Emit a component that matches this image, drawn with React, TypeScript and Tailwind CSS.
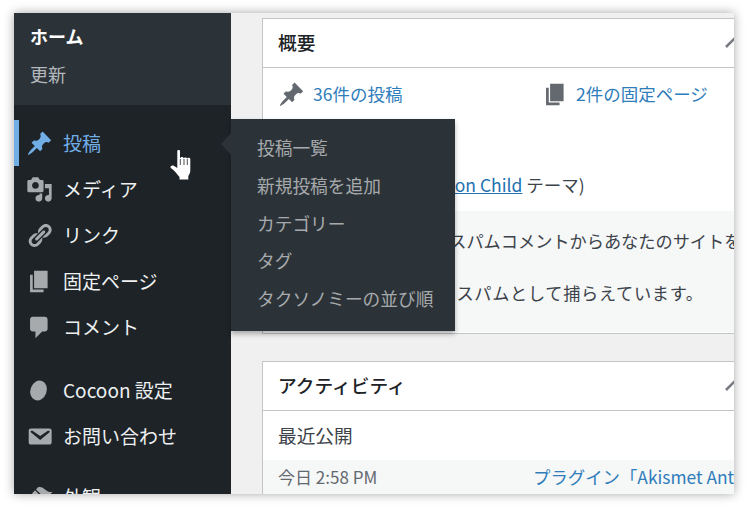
import React from 'react';

const font = "[font-family:'Noto_Sans_CJK_JP','Open_Sans',sans-serif]";

function Dash({ d, className }: { d: string; className: string }) {
  return (
    <svg viewBox="0 0 20 20" fill="currentColor" className={className}>
      <path d={d} />
    </svg>
  );
}

const pin = 'M10.44 3.02l1.82-1.82 6.36 6.35-1.83 1.82c-1.05-.68-2.48-.57-3.41.36l-.75.75c-.92.93-1.04 2.35-.35 3.41l-1.83 1.82-2.41-2.41-2.8 2.79c-.42.42-3.38 2.71-3.8 2.29s1.86-3.39 2.28-3.81l2.79-2.79L4.1 9.36l1.83-1.82c1.05.69 2.48.57 3.4-.36l.75-.75c.93-.92 1.05-2.35.36-3.41z';
const media = 'M13 11V4c0-.55-.45-1-1-1h-1.67L9 1H5L3.67 3H2c-.55 0-1 .45-1 1v7c0 .55.45 1 1 1h10c.55 0 1-.45 1-1zM7 4.5c1.38 0 2.5 1.12 2.5 2.5S8.38 9.5 7 9.5 4.5 8.38 4.5 7 5.62 4.5 7 4.5zM14 6h5v10.5c0 1.38-1.12 2.5-2.5 2.5S14 17.88 14 16.5s1.12-2.5 2.5-2.5c.17 0 .34.02.5.05V9h-3V6zm-4 8.05V13h2v3.5c0 1.38-1.12 2.5-2.5 2.5S7 17.88 7 16.5 8.12 14 9.5 14c.17 0 .34.02.5.05z';
const links = 'M17.74 2.76c1.68 1.69 1.68 4.41 0 6.1l-1.53 1.52c-1.12 1.12-2.7 1.47-4.14 1.09l2.62-2.61.76-.77.76-.76c.84-.84.84-2.2 0-3.04-.84-.85-2.2-.85-3.04 0l-.77.76-3.38 3.38c-.37-1.44-.02-3.02 1.1-4.14l1.52-1.53c1.69-1.68 4.42-1.68 6.1 0zM8.59 13.43l5.34-5.34c.42-.42.42-1.1 0-1.52-.44-.43-1.13-.39-1.53 0l-5.33 5.34c-.42.42-.42 1.1 0 1.52.44.43 1.13.39 1.52 0zm-.76 2.29l4.14-4.15c.38 1.44.03 3.02-1.09 4.14l-1.52 1.53c-1.69 1.68-4.41 1.68-6.1 0-1.68-1.68-1.68-4.42 0-6.1l1.53-1.52c1.12-1.12 2.7-1.47 4.14-1.1l-4.14 4.15c-.85.84-.85 2.2 0 3.05.84.84 2.2.84 3.04 0z';
const page = 'M6 15V2h10v13H6zm-1 1h8v2H3V5h2v11z';
const comment = 'M5 2h9c1.1 0 2 .9 2 2v7c0 1.1-.9 2-2 2h-2l-5 5v-5H5c-1.1 0-2-.9-2-2V4c0-1.1.9-2 2-2z';
const mail = 'M3.87 4h13.25C18.37 4 19 4.59 19 5.79v8.42c0 1.19-.63 1.79-1.88 1.79H3.87c-1.25 0-1.88-.6-1.88-1.79V5.79c0-1.2.63-1.79 1.88-1.79zm6.62 8.6l6.74-5.53c.24-.2.43-.66.13-1.07-.29-.41-.82-.42-1.17-.17l-5.7 3.86L4.8 5.83c-.35-.25-.88-.24-1.17.17-.3.41-.11.87.13 1.07z';
const brush = 'M14.48 11.06L7.41 3.99l1.5-1.5c.5-.56 2.3-.47 3.51.32 1.21.8 1.43 1.28 2.91 2.1 1.18.64 2.45 1.26 4.45.85zm-.71.71L6.7 4.7 4.93 6.47c-.39.39-.39 1.02 0 1.41l1.06 1.06c.39.39.39 1.03 0 1.42-.6.6-1.43 1.11-2.21 1.69-.35.26-.7.53-1.01.84C1.43 13.23.4 14.67 1.4 15.67c.99 1 2.43-.03 3.77-1.38.31-.31.58-.66.84-1.01.58-.78 1.09-1.61 1.69-2.21.39-.39 1.02-.39 1.41 0l1.06 1.06c.39.39 1.02.39 1.41 0z';
const cocoon = 'M11.87 2.95A7.5 6 -70 0 1 6.73 17.05A7.5 6 -70 0 1 11.87 2.95z';

function MenuItem({ d, label, className = '' }: { d: string; label: string; className?: string }) {
  return (
    <div className={`flex h-[46px] shrink-0 items-center pl-[12px] text-[19px] text-[#eef0f1] ${className}`}>
      <Dash d={d} className="h-[27px] w-[27px] shrink-0 text-[#a7aaad]" />
      <span className="ml-[10px]">{label}</span>
    </div>
  );
}

function Chevron() {
  return (
    <svg viewBox="0 0 20 20" className="absolute left-[461px] top-[14px] h-5 w-5" fill="none" stroke="#787c82" strokeWidth="2.6">
      <path d="M2 14l8-8 8 8" />
    </svg>
  );
}

function Sidebar() {
  return (
    <aside className="flex w-[217px] shrink-0 flex-col overflow-hidden bg-[#1d2327]">
      <div className="h-[92px] shrink-0 bg-[#2c3338] pl-[16px] pt-[9px]">
        <div className="h-[28px] text-[18px] leading-[28px] font-bold text-white">ホーム</div>
        <div className="mt-[12px] text-[18px] leading-[24px] text-[#b4b9be]">更新</div>
      </div>
      <div className="mt-[15px] flex h-[46px] shrink-0 items-center border-l-[5px] border-[#72aee6] pl-[7px] text-[19px] text-[#72aee6]">
        <Dash d={pin} className="h-[27px] w-[27px] shrink-0" />
        <span className="ml-[10px]">投稿</span>
      </div>
      <MenuItem d={media} label="メディア" />
      <MenuItem d={links} label="リンク" />
      <MenuItem d={page} label="固定ページ" />
      <MenuItem d={comment} label="コメント" />
      <MenuItem d={cocoon} label="Cocoon 設定" className="mt-[17px]" />
      <MenuItem d={mail} label="お問い合わせ" />
      <MenuItem d={brush} label="外観" className="mt-[15px]" />
    </aside>
  );
}

function Flyout() {
  const items = ['投稿一覧', '新規投稿を追加', 'カテゴリー', 'タグ', 'タクソノミーの並び順'];
  return (
    <div className="absolute left-[217px] top-[106px] h-[212px] w-[224px] bg-[#2c3338] pl-[26px] pt-[10px] shadow-[0_3px_5px_rgba(0,0,0,0.3)]">
      <div className="absolute left-[-10px] top-[14px] h-0 w-0 border-y-[11px] border-r-[10px] border-y-transparent border-r-[#2c3338]" />
      {items.map((t) => (
        <div key={t} className="h-[37.75px] text-[17.7px] leading-[37.75px] whitespace-nowrap text-[#a7aaad]">
          {t}
        </div>
      ))}
    </div>
  );
}

function Hand() {
  return (
    <svg viewBox="0 0 24 31" className="absolute left-[156px] top-[137px] h-[31px] w-[24px]">
      <path
        d="M7.300 1c0-1.300 2.700-1.300 2.700 0V8h.6c0-1.300 3-1.300 3 .3h.4c0-1.300 3-1.200 3 .3h.3c0-1.200 3-1 3 .6V20c0 3-1 4-2 6v3.500H9.500V27C7 24 4.500 20.500.8 18c-1-1.500.8-3.300 3-2.200l3.500 2.200z"
        fill="#fff"
      />
      <path d="M10.300 9v6M14 9v6M17.300 9v6" stroke="#1d2327" strokeWidth="0.8" />
    </svg>
  );
}

function Card({ title, children, className = '' }: { title: string; children: React.ReactNode; className?: string }) {
  return (
    <section className={`relative w-[520px] border border-[#c3c4c7] bg-white ${className}`}>
      <div className="h-[49px] border-b border-[#c3c4c7] pl-[15px] text-[18.7px] leading-[45px] font-medium text-[#1d2327]">
        {title}
      </div>
      <Chevron />
      {children}
    </section>
  );
}

export default function App() {
  return (
    <div className={`h-[509px] w-[748px] overflow-hidden bg-white pl-[14px] pt-[13px] ${font}`}>
      <div className="relative flex h-[481px] w-[720px] overflow-hidden bg-[#f0f0f1] shadow-[0_0_10px_rgba(0,0,0,0.35)]">
        <Sidebar />
        <main className="min-w-0 flex-1 overflow-hidden pl-[31px] pt-[5px]">
          <Card title="概要" className="h-[316px]">
            <div className="h-[143px] pl-[15px] pt-[12px] text-[17.5px] text-[#50575e]">
              <div className="flex h-[28px] items-center">
                <Dash d={pin} className="h-[27px] w-[27px] shrink-0 text-[#646970]" />
                <span className="ml-[8px] w-[229px] text-[#2f7dbb]">36件の投稿</span>
                <Dash d={page} className="h-[27px] w-[27px] shrink-0 text-[#646970]" />
                <span className="ml-[7px] text-[#2f7dbb]">2件の固定ページ</span>
              </div>
              <div className="mt-[64px] whitespace-nowrap text-[#3c434a]">
                WordPress 6.0.1(<span className="text-[#2271b1] underline">Cocoon Child</span> テーマ)
              </div>
            </div>
            <div className="h-[121px] bg-[#f6f7f7] pl-[15px] pt-[16px] text-[17.2px] whitespace-nowrap text-[#3c434a]">
              <div className="ml-[38px] h-[28px] leading-[28px]">Akismet は 0件のスパムコメントからあなたのサイトを保護しています。</div>
              <div className="ml-[-6px] mt-[24px] h-[28px] leading-[28px]">
                現在、0件のコメントを<span className="ml-[3px] tracking-[0.7px]">スパムとして捕らえています。</span>
              </div>
            </div>
          </Card>
          <Card title="アクティビティ" className="mt-[27px] h-[200px]">
            <div className="h-[49px] pl-[15px] text-[18.7px] leading-[47px] text-[#3c434a]">最近公開</div>
            <div className="flex h-[50px] bg-[#f6f7f7] pl-[15px] leading-[33px] whitespace-nowrap">
              <span className="w-[255px] shrink-0 text-[17px] text-[#646970]">今日 2:58 PM</span>
              <span className="text-[17.4px] text-[#2f7dbb]">プラグイン「Akismet Anti-Spam」</span>
            </div>
          </Card>
        </main>
        <Flyout />
        <Hand />
      </div>
    </div>
  );
}
